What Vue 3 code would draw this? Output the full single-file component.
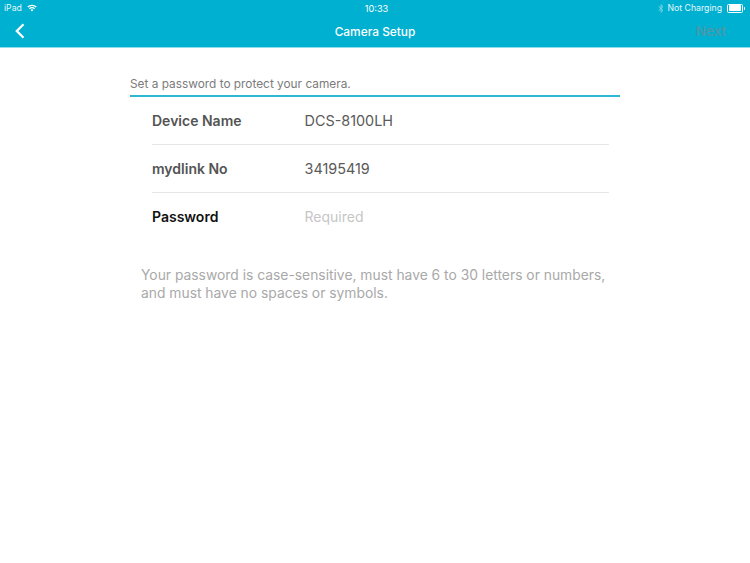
<script setup>
const rows = [
  { label: 'Device Name', value: 'DCS-8100LH' },
  { label: 'mydlink No', value: '34195419' },
  { label: 'Password', value: 'Required', active: true },
]
</script>

<template>
  <div class="page">
    <header class="header">
      <div class="status">
        <div class="side">
          <span>iPad</span>
          <svg class="wifi" width="10" height="8" viewBox="0 0 10 8">
            <path d="M0.3 2.6A6.6 6.6 0 0 1 9.7 2.6L8.8 3.6A5.3 5.3 0 0 0 1.2 3.6Z" fill="#fff" />
            <path d="M2 4.3A4.2 4.2 0 0 1 8 4.3L7.1 5.2A3 3 0 0 0 2.9 5.2Z" fill="#fff" />
            <path d="M3.6 5.9A2 2 0 0 1 6.4 5.9L5 7.4Z" fill="#fff" />
          </svg>
        </div>
        <span class="time">10:33</span>
        <div class="side right">
          <svg class="bt" width="6" height="9" viewBox="0 0 6 9">
            <path d="M0.6 2.4L5 6.4L3 8.3V0.7L5 2.6L0.6 6.6" fill="none" stroke="#8fdbe9" stroke-width="0.8" />
          </svg>
          <span>Not Charging</span>
          <div class="battery"><i class="level"></i></div>
          <i class="nub"></i>
        </div>
      </div>
      <div class="nav">
        <svg class="back" width="10" height="16" viewBox="0 0 10 16">
          <path d="M8.5 1.2L1.8 8L8.5 14.8" fill="none" stroke="#fff" stroke-width="2.3" />
        </svg>
        <span class="title">Camera Setup</span>
        <span class="next">Next</span>
      </div>
    </header>

    <main class="content">
      <p class="intro">Set a password to protect your camera.</p>
      <div class="rows">
        <div v-for="row in rows" :key="row.label" class="row">
          <span class="label" :class="{ active: row.active }">{{ row.label }}</span>
          <span class="value" :class="{ placeholder: row.active }">{{ row.value }}</span>
        </div>
      </div>
      <p class="help">
        Your password is case-sensitive, must have 6 to 30 letters or numbers,<br />
        and must have no spaces or symbols.
      </p>
    </main>
  </div>
</template>

<style>
html, body { margin: 0; background: #fff; }
</style>

<style scoped>
.page {
  width: 750px;
  height: 563px;
  background: #fff;
  font-family: Inter, "Liberation Sans", sans-serif;
  overflow: hidden;
}
.header {
  height: 47px;
  background: #00b0d0;
  color: #fff;
  border-bottom: 1px solid #8fdcea;
}
.status {
  height: 16px;
  display: grid;
  grid-template-columns: 1fr auto 1fr;
  align-items: center;
  padding: 0 5px 0 4px;
  font-size: 8.7px;
  color: #e4f7fb;
}
.side { display: flex; align-items: center; gap: 5px; }
.right { justify-content: flex-end; gap: 4px; }
.wifi { margin-top: -1px; }
.time { font-size: 9.2px; color: #fff; margin-left: 4px; }
.battery {
  width: 13px;
  height: 6px;
  margin-left: 1px;
  border: 0.5px solid #fff;
  border-radius: 1.5px;
  padding: 0.5px;
  display: flex;
}
.level { flex: 0 0 12px; background: #fff; border-radius: 1px; }
.nub {
  width: 1.5px;
  height: 3px;
  margin-left: -3.5px;
  background: #fff;
  border-radius: 0 1px 1px 0;
}
.nav {
  height: 31px;
  display: grid;
  grid-template-columns: 1fr auto 1fr;
  align-items: center;
  padding: 0 15px;
}
.back { justify-self: start; margin-top: -2px; }
.title { font-size: 11.9px; font-weight: 500; margin-top: -1px; }
.next {
  justify-self: end;
  margin-right: 9px;
  font-size: 13.5px;
  font-weight: 500;
  color: #4f97a8;
  margin-top: -1px;
}
.content { padding: 28px 130px 0; }
.intro {
  margin: 0;
  height: 19px;
  line-height: 17px;
  font-size: 11.85px;
  color: #7b7b7b;
  border-bottom: 2px solid #2cb8d2;
}
.rows { padding: 0 11px 0 22px; }
.row {
  box-sizing: border-box;
  height: 48px;
  display: flex;
  align-items: center;
  font-size: 14.4px;
  color: #555;
  border-bottom: 1px solid #e6e6e6;
}
.row:last-child { border-bottom-color: transparent; }
.label { width: 152.5px; font-size: 14px; font-weight: 600; color: #545454; }
.label.active { color: #111; }
.value { color: #5a5a5a; }
.value.placeholder { color: #c6c6c6; font-size: 14px; }
.help {
  margin: 25px 0 0 11px;
  font-size: 13.85px;
  line-height: 18px;
  color: #a9a9a9;
  white-space: nowrap;
}
</style>
